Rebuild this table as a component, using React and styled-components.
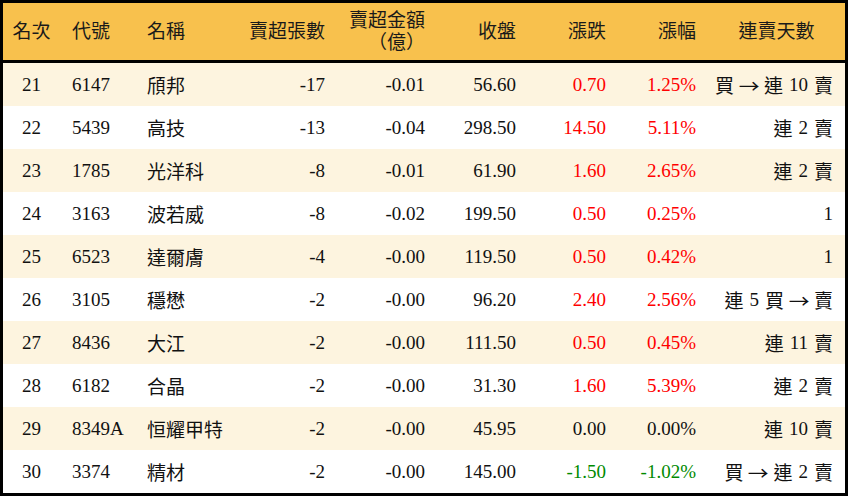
import React from 'react';
import styled, { createGlobalStyle } from 'styled-components';

const GlobalStyle = createGlobalStyle`
  html, body {
    margin: 0;
    padding: 0;
    background: #fff;
  }
  body {
    font-family: "Liberation Serif", "Noto Sans CJK TC", serif;
    color: #111;
  }
`;

const rows = [
  { rank: 21, code: '6147', name: '頎邦', vol: '-17', amt: '-0.01', close: '56.60', chg: '0.70', pct: '1.25%', streak: '買 → 連 10 賣' },
  { rank: 22, code: '5439', name: '高技', vol: '-13', amt: '-0.04', close: '298.50', chg: '14.50', pct: '5.11%', streak: '連 2 賣' },
  { rank: 23, code: '1785', name: '光洋科', vol: '-8', amt: '-0.01', close: '61.90', chg: '1.60', pct: '2.65%', streak: '連 2 賣' },
  { rank: 24, code: '3163', name: '波若威', vol: '-8', amt: '-0.02', close: '199.50', chg: '0.50', pct: '0.25%', streak: '1' },
  { rank: 25, code: '6523', name: '達爾膚', vol: '-4', amt: '-0.00', close: '119.50', chg: '0.50', pct: '0.42%', streak: '1' },
  { rank: 26, code: '3105', name: '穩懋', vol: '-2', amt: '-0.00', close: '96.20', chg: '2.40', pct: '2.56%', streak: '連 5 買 → 賣' },
  { rank: 27, code: '8436', name: '大江', vol: '-2', amt: '-0.00', close: '111.50', chg: '0.50', pct: '0.45%', streak: '連 11 賣' },
  { rank: 28, code: '6182', name: '合晶', vol: '-2', amt: '-0.00', close: '31.30', chg: '1.60', pct: '5.39%', streak: '連 2 賣' },
  { rank: 29, code: '8349A', name: '恒耀甲特', vol: '-2', amt: '-0.00', close: '45.95', chg: '0.00', pct: '0.00%', streak: '連 10 賣' },
  { rank: 30, code: '3374', name: '精材', vol: '-2', amt: '-0.00', close: '145.00', chg: '-1.50', pct: '-1.02%', streak: '買 → 連 2 賣' },
];

const COLS = '57px 75px 95px 107px 100px 91px 90px 90px 137px';

const toneOf = (v) => {
  const n = parseFloat(v);
  if (n > 0) return 'up';
  if (n < 0) return 'down';
  return 'flat';
};

const toneColor = { up: '#ff0000', down: '#008a00', flat: '#111' };

const Board = styled.div`
  width: 848px;
  height: 496px;
  box-sizing: border-box;
  border: 3px solid #000;
  display: flex;
  flex-direction: column;
  overflow: hidden;
`;

const HeadRow = styled.div`
  display: grid;
  grid-template-columns: ${COLS};
  height: 57px;
  background: #f8c14d;
  border-bottom: 3px solid #000;
  flex-shrink: 0;
`;

const HeadCell = styled.div`
  display: flex;
  flex-direction: column;
  justify-content: center;
  align-items: ${(p) => (p.align === 'right' ? 'flex-end' : p.align === 'center' ? 'center' : 'flex-start')};
  text-align: ${(p) => p.align || 'left'};
  padding: 0 12px;
  font-size: 19px;
  line-height: 22px;
  color: #1a1a1a;
  white-space: nowrap;
`;

const Row = styled.div`
  display: grid;
  grid-template-columns: ${COLS};
  height: 43px;
  background: ${(p) => (p.shade ? '#fdf4df' : '#fff')};
`;

const Cell = styled.div`
  display: flex;
  align-items: center;
  justify-content: ${(p) => (p.align === 'right' ? 'flex-end' : p.align === 'center' ? 'center' : 'flex-start')};
  padding: 0 12px;
  font-size: 19px;
  color: ${(p) => (p.tone ? toneColor[p.tone] : '#111')};
  white-space: nowrap;
`;

const Streak = styled(Cell)`
  gap: 6px;
`;

const Arrow = styled.span`
  font-family: "Noto Sans CJK TC", sans-serif;
  font-size: 18px;
  transform: scaleX(1.15);
`;

export default function App() {
  return (
    <>
      <GlobalStyle />
      <Board>
        <HeadRow>
          <HeadCell align="center">名次</HeadCell>
          <HeadCell>代號</HeadCell>
          <HeadCell>名稱</HeadCell>
          <HeadCell align="right">賣超張數</HeadCell>
          <HeadCell align="right">
            <span>賣超金額</span>
            <span>（億）</span>
          </HeadCell>
          <HeadCell align="right">收盤</HeadCell>
          <HeadCell align="right">漲跌</HeadCell>
          <HeadCell align="right">漲幅</HeadCell>
          <HeadCell align="center">連賣天數</HeadCell>
        </HeadRow>
        {rows.map((r, i) => (
          <Row key={r.rank} shade={i % 2 === 0}>
            <Cell align="center">{r.rank}</Cell>
            <Cell>{r.code}</Cell>
            <Cell>{r.name}</Cell>
            <Cell align="right">{r.vol}</Cell>
            <Cell align="right">{r.amt}</Cell>
            <Cell align="right">{r.close}</Cell>
            <Cell align="right" tone={toneOf(r.chg)}>{r.chg}</Cell>
            <Cell align="right" tone={toneOf(r.pct)}>{r.pct}</Cell>
            <Streak align="right">
              {r.streak.split(' ').map((t, k) =>
                t === '→' ? <Arrow key={k}>→</Arrow> : <span key={k}>{t}</span>
              )}
            </Streak>
          </Row>
        ))}
      </Board>
    </>
  );
}
